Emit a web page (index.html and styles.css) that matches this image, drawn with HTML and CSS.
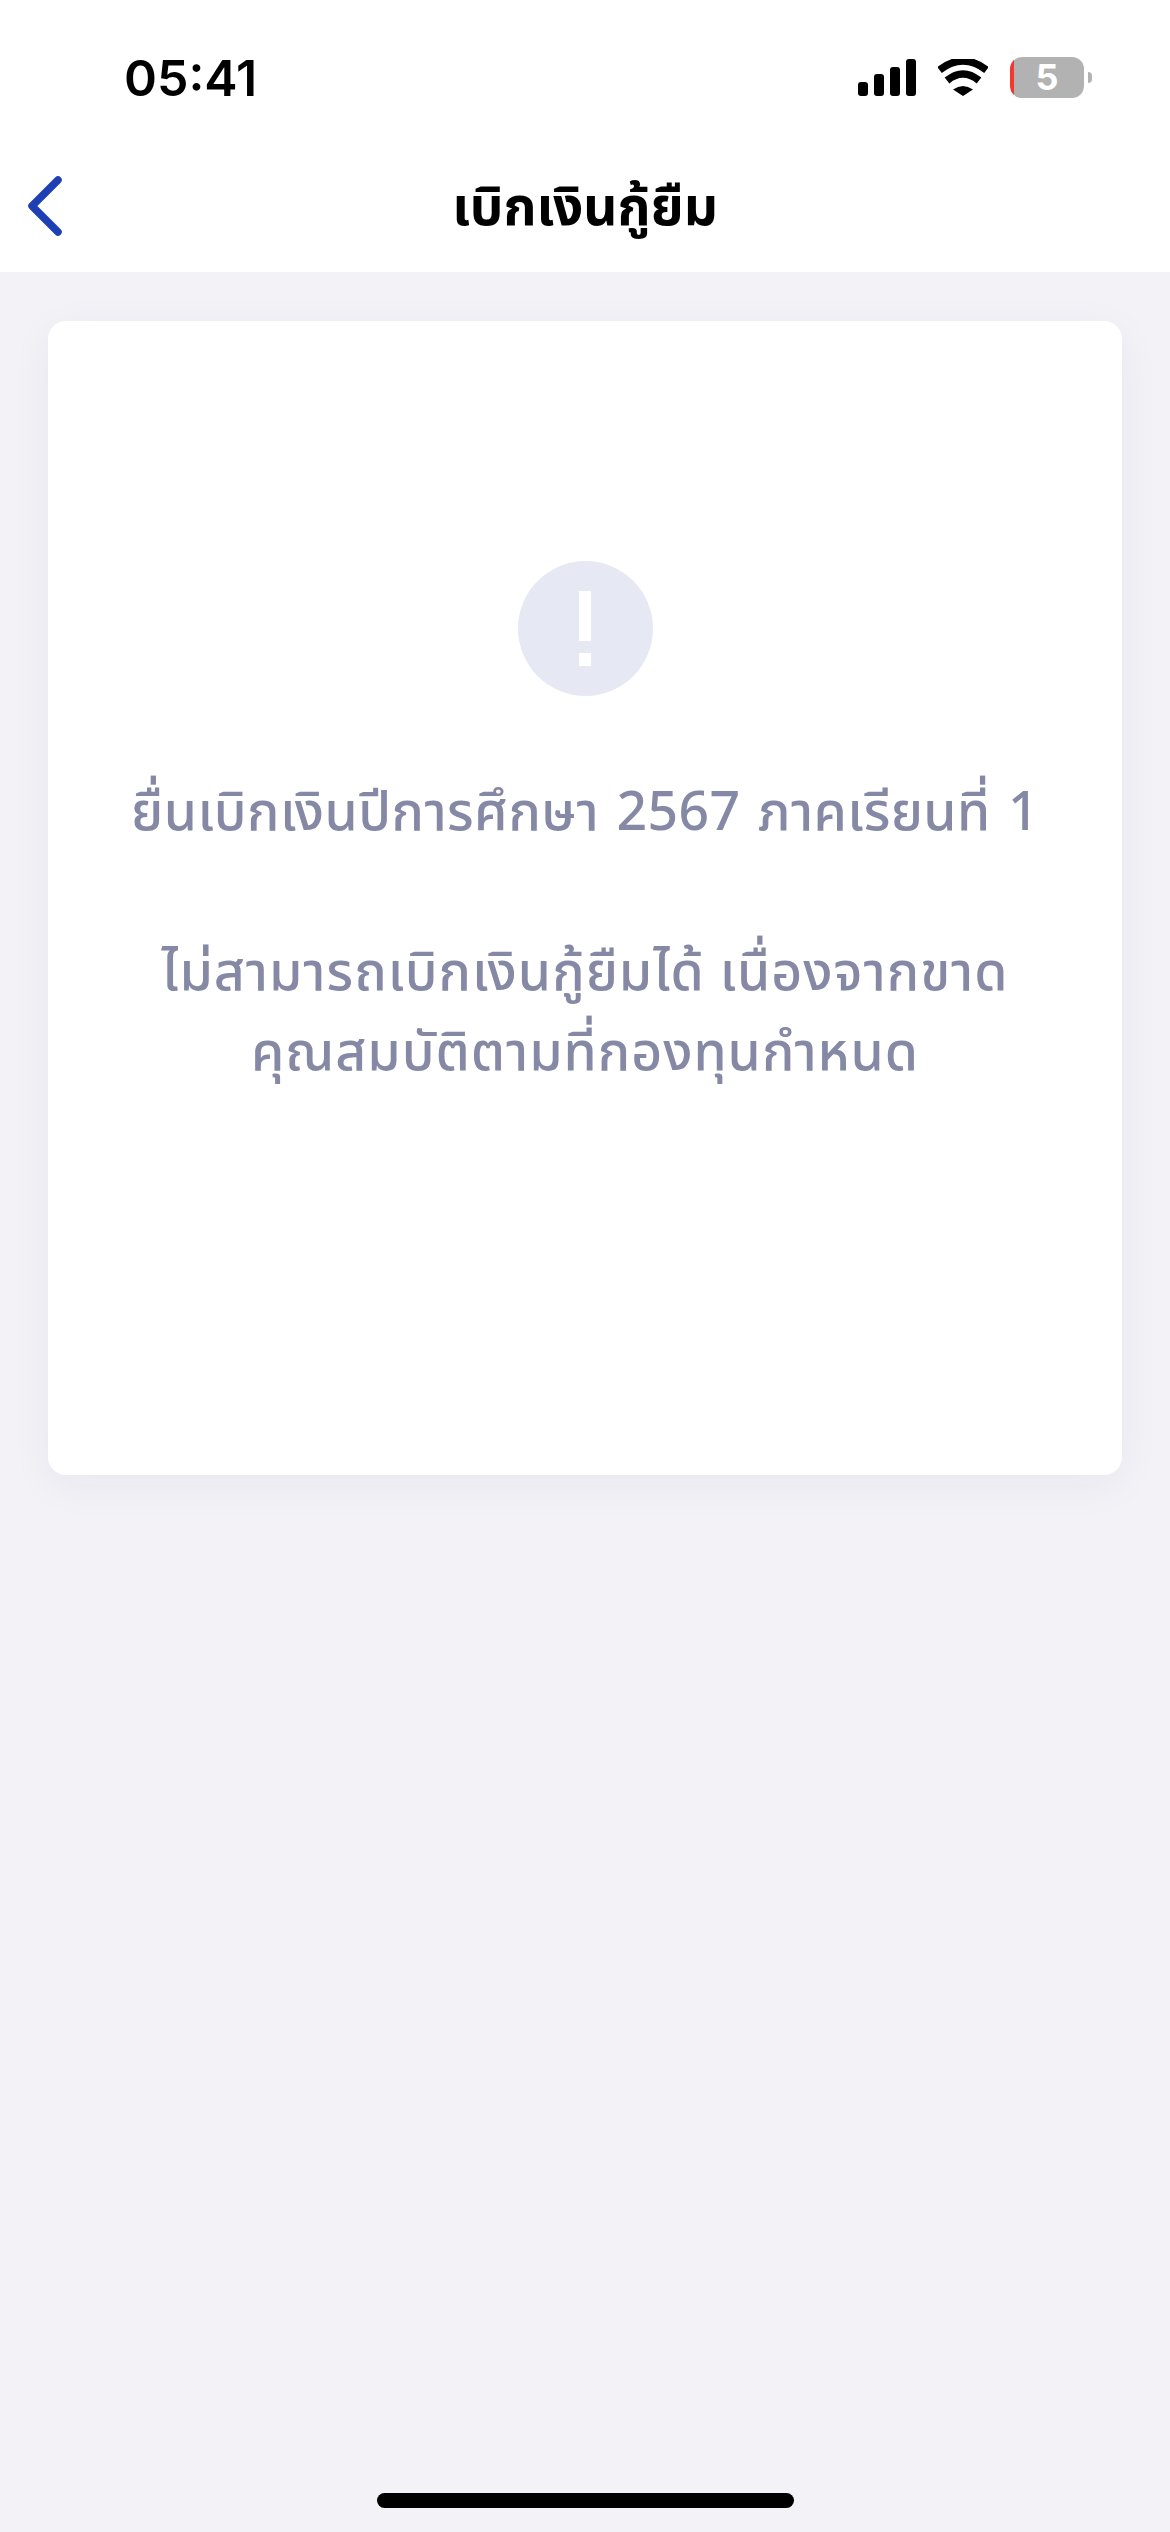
FILE: index.html
```html
<!DOCTYPE html>
<html lang="th">
<head>
    <meta charset="UTF-8">
    <meta name="viewport" content="width=device-width, initial-scale=1.0">
    <title>เบิกเงินกู้ยืม</title>
    <link rel="stylesheet" href="styles.css">
</head>
<body>
    <div class="screen">
        <header class="top">
            <div class="status-bar">
                <span class="time">05:41</span>
                <div class="status-icons">
                    <div class="signal">
                        <span class="bar bar-1"></span>
                        <span class="bar bar-2"></span>
                        <span class="bar bar-3"></span>
                        <span class="bar bar-4"></span>
                    </div>
                    <svg class="wifi" viewBox="0 0 50 37">
                        <path d="M25 37 L15 30.500 Q25 23.500 35 30.500 Z" fill="#000"/>
                        <path d="M9 21.500 Q25 8.500 41 21.500" fill="none" stroke="#000" stroke-width="7.500"/>
                        <path d="M1.500 11 Q25 -7 48.500 11" fill="none" stroke="#000" stroke-width="7.500"/>
                    </svg>
                    <div class="battery">
                        <div class="battery-body"><span class="battery-level">5</span></div>
                        <span class="battery-nub"></span>
                    </div>
                </div>
            </div>
            <nav class="nav-bar">
                <svg class="back" viewBox="0 0 37 60">
                    <path d="M32 4 L6 30 L32 56" fill="none" stroke="#1f3fb5" stroke-width="7.500" stroke-linecap="round" stroke-linejoin="round"/>
                </svg>
                <h1 class="nav-title">เบิกเงินกู้ยืม</h1>
            </nav>
        </header>

        <main class="content">
            <section class="card">
                <div class="alert-icon">
                    <span class="alert-stem"></span>
                    <span class="alert-dot"></span>
                </div>
                <p class="message message-term">ยื่นเบิกเงินปีการศึกษา 2567 ภาคเรียนที่ 1</p>
                <p class="message message-gap">ไม่สามารถเบิกเงินกู้ยืมได้ เนื่องจากขาด<br>คุณสมบัติตามที่กองทุนกำหนด</p>
            </section>
        </main>

        <div class="home-indicator"></div>
    </div>
</body>
</html>
```
FILE: styles.css
```css
body, html {
    margin: 0;
    padding: 0;
    height: 100%;
    font-family: "Noto Sans Thai", "Noto Sans", "Inter", "Liberation Sans", sans-serif;
    background-color: #f2f2f7;
}
.screen {
    height: 2532px;
    display: flex;
    flex-direction: column;
    overflow: hidden;
}
.top {
    background-color: #ffffff;
    height: 272px;
}
.status-bar {
    height: 152px;
    display: flex;
    justify-content: space-between;
    padding: 54px 78px 0 124px;
    box-sizing: border-box;
}
.time {
    font-family: "Inter", "Liberation Sans", sans-serif;
    font-size: 50px;
    line-height: 48px;
    font-weight: 600;
    color: #000;
}
.status-icons {
    display: flex;
    gap: 22px;
    padding-top: 3px;
}
.signal {
    display: flex;
    align-items: flex-end;
    gap: 6px;
    height: 37px;
    margin-top: 2px;
}
.bar {
    width: 10px;
    background-color: #000;
    border-radius: 3px;
}
.bar-1 { height: 14px; }
.bar-2 { height: 22px; }
.bar-3 { height: 29px; }
.bar-4 { height: 37px; }
.wifi {
    width: 50px;
    height: 37px;
    margin-top: 2px;
}
.battery {
    display: flex;
    align-items: center;
    gap: 4px;
    height: 41px;
}
.battery-body {
    width: 74px;
    height: 41px;
    border-radius: 12px;
    background: linear-gradient(to right, #f03a2e 4px, #b2b2b2 4px);
    color: #fff;
    font-family: "Inter", "Liberation Sans", sans-serif;
    font-size: 36px;
    font-weight: 700;
    line-height: 41px;
    text-align: center;
}
.battery-nub {
    width: 4px;
    height: 11px;
    background-color: #b2b2b2;
    border-radius: 0 6px 6px 0;
}
.nav-bar {
    position: relative;
    height: 120px;
    display: flex;
    justify-content: center;
    align-items: center;
}
.back {
    position: absolute;
    left: 26px;
    top: 24px;
    width: 37px;
    height: 60px;
}
.nav-title {
    margin: 0 0 6px;
    font-size: 53px;
    font-weight: 700;
    color: #000;
}
.content {
    padding: 49px 48px 0;
}
.card {
    height: 1154px;
    box-sizing: border-box;
    padding-top: 240px;
    background-color: #ffffff;
    border-radius: 18px;
    box-shadow: 0 10px 44px rgba(40, 40, 70, 0.05);
    display: flex;
    flex-direction: column;
    align-items: center;
}
.alert-icon {
    width: 135px;
    height: 135px;
    border-radius: 50%;
    background-color: #e6e8f3;
    display: flex;
    flex-direction: column;
    align-items: center;
    padding-top: 30px;
    box-sizing: border-box;
    gap: 12px;
}
.alert-stem {
    width: 12px;
    height: 50px;
    background-color: #fff;
}
.alert-dot {
    width: 12px;
    height: 13px;
    background-color: #fff;
}
.message {
    margin: 78px 0 0;
    font-size: 53.5px;
    font-weight: 500;
    line-height: 80px;
    letter-spacing: 1px;
    color: #8589a5;
    text-align: center;
}
.message.message-term {
    letter-spacing: 0.4px;
    word-spacing: 3px;
}
.message.message-gap {
    margin-top: 80px;
}
.home-indicator {
    width: 417px;
    height: 15px;
    margin: auto auto 24px;
    background-color: #000;
    border-radius: 8px;
}
```
